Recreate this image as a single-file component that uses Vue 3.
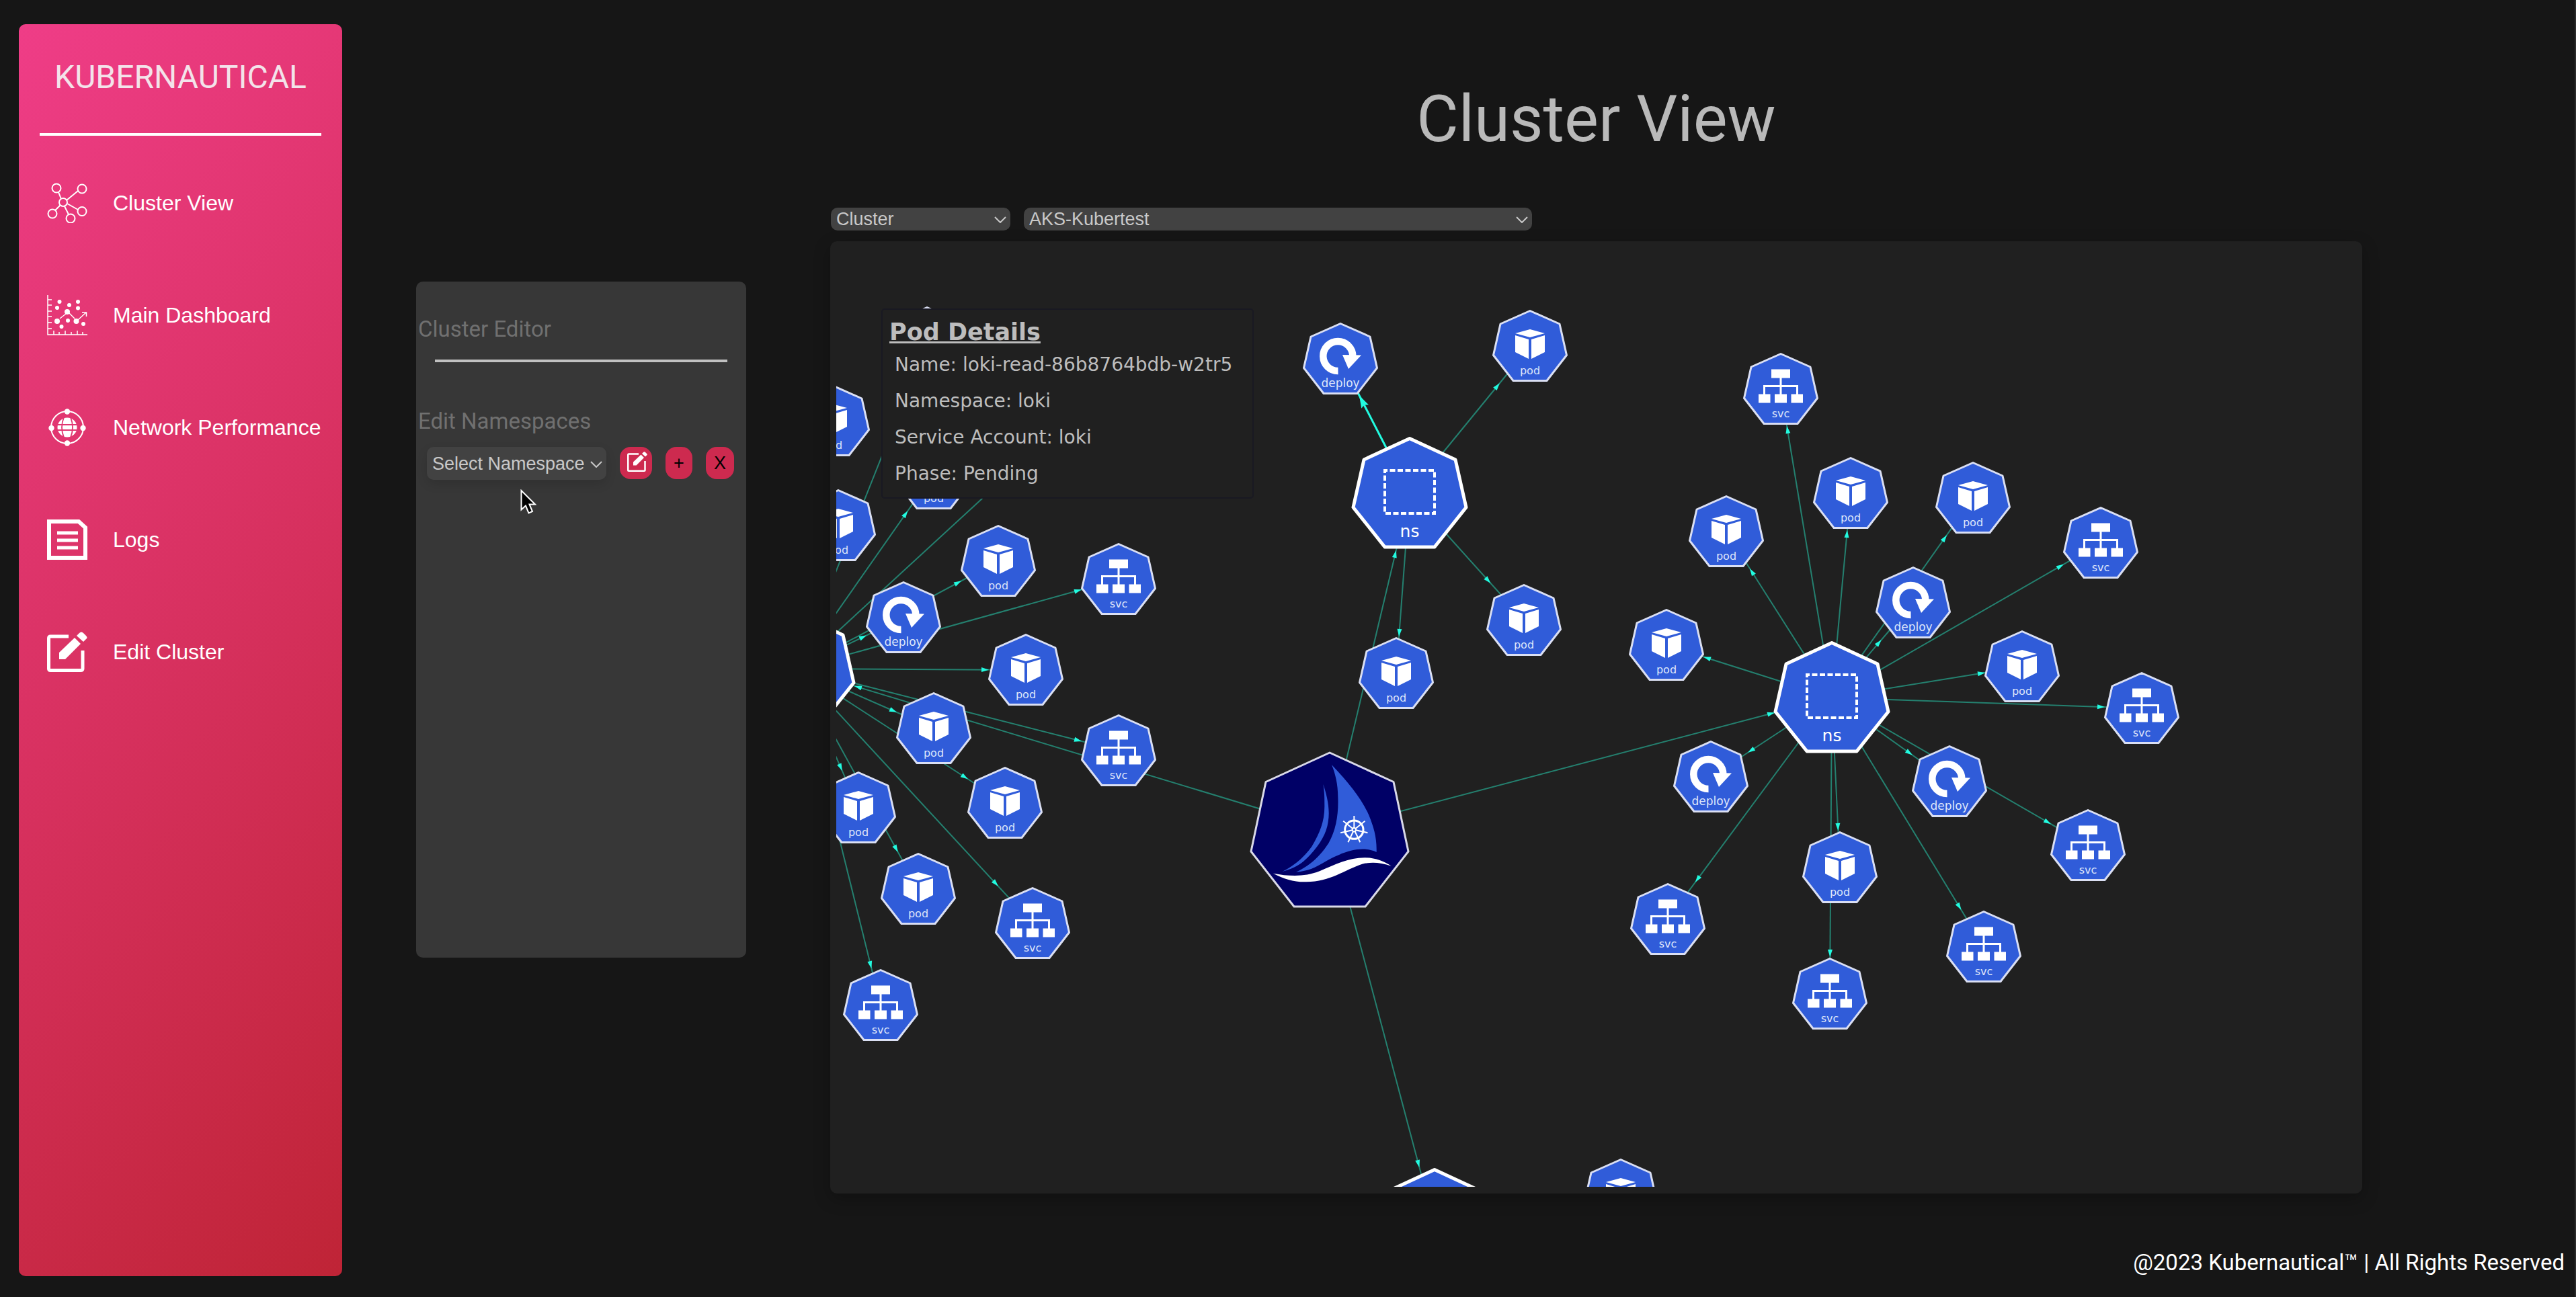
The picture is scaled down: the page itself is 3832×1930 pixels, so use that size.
<script setup>
import { ref } from 'vue'

const view = ref('Cluster')
const cluster = ref('AKS-Kubertest')
const namespace = ref('')

const navItems = [
  { label: 'Cluster View', icon: 'cluster' },
  { label: 'Main Dashboard', icon: 'dashboard' },
  { label: 'Network Performance', icon: 'network' },
  { label: 'Logs', icon: 'logs' },
  { label: 'Edit Cluster', icon: 'edit' }
]

const podDetails = [
  'Name: loki-read-86b8764bdb-w2tr5',
  'Namespace: loki',
  'Service Account: loki',
  'Phase: Pending'
]

// Visible part of the panned graph, and the area that the tooltip covers.
const viewport = { left: 1244, top: 368, right: 3505, bottom: 1766 }
const covered = { left: 1311, top: 459, right: 1865, bottom: 742 }

// Half of each node type's square bounding box; x is the centre, y the top of the shape.
const halfSize = { pod: 54, svc: 54, deploy: 54, ns: 84, root: 117 }

const namespaces = [
  {
    x: 1186, y: 911,
    children: [
      ['pod', 1379, 456], ['pod', 1600, 560], ['pod', 1238, 572], ['pod', 1389, 651],
      ['pod', 1247, 728], ['pod', 1485, 781], ['svc', 1664, 808], ['deploy', 1344, 865],
      ['pod', 1526, 943], ['svc', 1664, 1063], ['pod', 1389, 1030], ['pod', 1495, 1141],
      ['pod', 1366, 1269], ['pod', 1277, 1148], ['svc', 1536, 1320], ['svc', 1310, 1442]
    ]
  },
  {
    x: 2097, y: 650,
    children: [
      ['deploy', 1994, 480, true], ['pod', 2276, 461], ['pod', 2267, 869], ['pod', 2077, 948]
    ]
  },
  {
    x: 2725, y: 954,
    children: [
      ['svc', 2649, 525], ['pod', 2753, 680], ['pod', 2935, 687], ['pod', 2568, 737],
      ['svc', 3125, 754], ['deploy', 2846, 843], ['pod', 2479, 906], ['pod', 3008, 938],
      ['svc', 3186, 1000], ['deploy', 2545, 1102], ['svc', 3106, 1204], ['deploy', 2900, 1109],
      ['svc', 2481, 1314], ['svc', 2951, 1355], ['svc', 2722, 1425], ['pod', 2737, 1237]
    ]
  },
  { x: 2134, y: 1738, children: [] }
]

const root = { type: 'root', x: 1978, y: 1118 }
const nodes = [root]
const edges = []

function connect(from, to, strong = false) {
  const y1 = from.y + halfSize[from.type]
  const y2 = to.y + halfSize[to.type]
  const dx = to.x - from.x
  const dy = y2 - y1
  const box = halfSize[to.type] + 2
  const t = box / Math.max(Math.abs(dx), Math.abs(dy))
  edges.push({
    x1: from.x, y1, x2: to.x, y2, strong,
    tipX: to.x - dx * t,
    tipY: y2 - dy * t,
    angle: Math.atan2(dy, dx) * 180 / Math.PI
  })
}

for (const group of namespaces) {
  const ns = { type: 'ns', x: group.x, y: group.y }
  connect(root, ns)
  for (const [type, x, y, strong] of group.children) {
    const node = { type, x, y }
    connect(ns, node, strong)
    nodes.push(node)
  }
  nodes.push(ns)
}
nodes.push({ type: 'pod', x: 2411, y: 1724 })

function labelY(node) {
  return node.type === 'ns' ? 149 : 96
}

// A label is drawn only where some of it can be seen.
function hasLabel(node) {
  if (node.type === 'root') return false
  const baseline = node.y + labelY(node)
  if (node.x + 16 < viewport.left || baseline > viewport.bottom) return false
  return !(node.x > covered.left && node.x < covered.right && baseline > covered.top && baseline < covered.bottom)
}

const spokes = Array.from({ length: 7 }, (_, i) => i * 360 / 7)
</script>

<template>
  <div class="app">
    <aside class="sidebar">
      <h2 class="brand">KUBERNAUTICAL</h2>
      <hr class="brand-rule">
      <nav class="nav">
        <a v-for="item in navItems" :key="item.label" class="nav-link" href="#">
          <svg class="nav-icon" viewBox="0 0 60 60" aria-hidden="true">
            <g v-if="item.icon === 'cluster'" fill="none" stroke="#fff" stroke-width="2">
              <path d="M17 14 21 24M29 26 46 12M20 33 12 41M26 35 32 47M30 31 46 40" />
              <circle cx="24" cy="29" r="6" /><circle cx="14" cy="8" r="6.5" />
              <circle cx="52" cy="9" r="6.5" /><circle cx="8" cy="46" r="6.5" />
              <circle cx="52" cy="42.5" r="6.5" /><circle cx="35" cy="53" r="6.5" />
            </g>
            <g v-else-if="item.icon === 'dashboard'" fill="#fff" stroke="#fff" stroke-width="1.5">
              <path fill="none" d="M1 0V59H60M1 7H7M1 15H7M1 24H7M1 32H7M1 41H7M1 50H7M10 53V59M18 55V59M27 53V59M36 55V59M45 53V59M53 55V59M19 35 28 28M33 27 41 35M46 37 58 26M52 26H58.500V32" />
              <g stroke="none">
                <circle cx="15" cy="39" r="4" /><circle cx="30" cy="25" r="4" /><circle cx="43.500" cy="39" r="4" />
                <circle cx="18.500" cy="10" r="3" /><circle cx="15" cy="19" r="3" /><circle cx="33" cy="15" r="3" />
                <circle cx="46" cy="10" r="3" /><circle cx="46" cy="19.500" r="3" /><circle cx="31" cy="38" r="3" />
                <circle cx="21.500" cy="47" r="3" /><circle cx="54" cy="43" r="3" />
              </g>
            </g>
            <g v-else-if="item.icon === 'network'">
              <circle cx="30" cy="30" r="24" fill="none" stroke="#fff" stroke-width="2" />
              <g fill="#fff">
                <circle cx="30" cy="6.500" r="4.200" /><circle cx="30" cy="53.500" r="4.200" />
                <circle cx="6.500" cy="31" r="4.200" /><circle cx="53.500" cy="31" r="4.200" />
                <circle cx="30" cy="30" r="14.500" />
              </g>
              <path fill="none" stroke="#e23671" stroke-width="1.800" d="M15 26H45M15 34H45M25 15Q19 30 25 45M35 15Q41 30 35 45" />
            </g>
            <g v-else-if="item.icon === 'logs'" fill="none" stroke="#fff">
              <path stroke-width="6" d="M3 3H47L57 12V57H3Z" />
              <path stroke-width="5" d="M15 20H46M15 31H46M15 42H46" />
            </g>
            <g v-else>
              <path fill="none" stroke="#fff" stroke-width="5" d="M32 7H5Q2.500 7 2.500 10V55Q2.500 57.500 5 57.500H50Q53 57.500 53 55V28" />
              <path fill="#fff" d="M18 41V31L41 9 50 18 27 41ZM44 6 48 2Q51-1 54 2L58 6Q61 9 58 11L54 15Z" />
            </g>
          </svg>
          <span>{{ item.label }}</span>
        </a>
      </nav>
    </aside>

    <div class="content">
      <div class="workspace">
        <section class="editor">
          <h3 class="editor-heading">Cluster Editor</h3>
          <hr class="editor-rule">
          <h3 class="editor-heading editor-sub">Edit Namespaces</h3>
          <div class="editor-row">
            <div class="select-box namespace-box">
              <select v-model="namespace" class="select namespace-select" aria-label="Select Namespace">
                <option value="">Select Namespace</option>
              </select>
              <svg class="chevron" viewBox="0 0 18 10" aria-hidden="true"><path d="M1 1 9 9 17 1" /></svg>
            </div>
            <button class="action action-edit" type="button" aria-label="Edit namespace">
              <svg class="action-icon" viewBox="0 0 60 60" aria-hidden="true">
                <path fill="none" stroke="#fff" stroke-width="5" d="M34 7H5Q2.500 7 2.500 10V55Q2.500 57.500 5 57.500H50Q53 57.500 53 55V28" />
                <path fill="#fff" d="M18 41V31L41 9 50 18 27 41ZM44 6 48 2Q51-1 54 2L58 6Q61 9 58 11L54 15Z" />
              </svg>
            </button>
            <button class="action action-add" type="button">+</button>
            <button class="action action-remove" type="button">X</button>
          </div>
          <svg class="pointer" viewBox="0 0 24 37" aria-hidden="true">
            <path d="M1.500 2V30.500L8 24.500 12.500 35.500 18 33 13.500 22.500H22Z" />
          </svg>
        </section>

        <main class="main">
          <h1 class="title">Cluster View</h1>
          <div class="filters">
            <div class="select-box view-box">
              <select v-model="view" class="select" aria-label="View">
                <option>Cluster</option>
              </select>
              <svg class="chevron" viewBox="0 0 18 10" aria-hidden="true"><path d="M1 1 9 9 17 1" /></svg>
            </div>
            <div class="select-box cluster-box">
              <select v-model="cluster" class="select" aria-label="Cluster">
                <option>AKS-Kubertest</option>
              </select>
              <svg class="chevron" viewBox="0 0 18 10" aria-hidden="true"><path d="M1 1 9 9 17 1" /></svg>
            </div>
          </div>

          <div class="graph">
            <svg class="canvas" viewBox="1244 368 2261 1398">
              <defs>
                <g id="shape">
                  <path d="M0 1.500 44 21 54.500 67.500 25 105.500H-25L-54.500 67.500-44 21Z" fill="#305cd9" stroke="#dadff3" stroke-width="3" stroke-linejoin="round" />
                </g>
                <g id="pod">
                  <use href="#shape" />
                  <path fill="#fff" d="M0 29 22 35 0 41-22 35ZM-22 38-2 44V73L-22 63ZM22 38 2 44V73L22 63Z" />
                </g>
                <g id="svc">
                  <use href="#shape" />
                  <path fill="#fff" d="M-14 24.500H14V37.500H-14ZM-33 61.500H-15.500V74.500H-33ZM-9 61.500H9V74.500H-9ZM15.500 61.500H33V74.500H15.500Z" />
                  <path fill="none" stroke="#fff" stroke-width="3" d="M0 37V62M-24.500 62V49.500H24.500V62" />
                </g>
                <g id="deploy">
                  <use href="#shape" />
                  <path fill="none" stroke="#fff" stroke-width="10.500" d="M-3.500 72A22 22 0 1 1 18.300 50" />
                  <path fill="#fff" d="M3 48 31 48.500 12 69Z" />
                </g>
                <g id="ns">
                  <path d="M0 2.500 68 34 84 105 37 164H-37L-84 105-68 34Z" fill="#305cd9" stroke="#fff" stroke-width="5" stroke-linejoin="round" />
                  <rect x="-37" y="50" width="74" height="64" fill="none" stroke="#fff" stroke-width="4" stroke-dasharray="8 3.500" stroke-dashoffset="4" />
                </g>
                <g id="root">
                  <path d="M0 2 95 45.500 117 149 53 231H-53L-117 149-95 45.500Z" fill="#000066" stroke="#d9d9e8" stroke-width="3" stroke-linejoin="round" />
                  <g transform="scale(.3333) translate(-415 -55)">
                    <path fill="#305cd9" d="M386 202C402 250 418 310 408 370C400 430 360 490 300 545C270 570 240 583 203 592C250 570 300 530 335 480C370 420 392 370 392 300C392 262 392 240 386 202Z" />
                    <path fill="#305cd9" d="M424 115C500 195 560 270 590 340C612 395 626 440 624 505C560 475 480 500 400 545C350 575 320 590 265 594C340 560 380 510 410 465C445 405 455 330 452 260C452 200 440 155 424 115Z" />
                    <path fill="#fff" d="M163 600C230 612 300 618 370 590C440 560 500 530 570 530C620 530 655 545 690 567C640 550 600 548 560 558C480 585 420 636 310 638C260 640 210 625 163 600Z" />
                    <g transform="translate(524 405)" stroke="#fff" fill="none">
                      <circle r="41" stroke-width="9" />
                      <circle r="8" stroke-width="6" />
                      <g v-for="a in spokes" :key="a" :transform="`rotate(${a})`">
                        <path stroke-width="6" d="M0-8V-62" />
                      </g>
                    </g>
                  </g>
                </g>
              </defs>

              <g v-for="(e, i) in edges" :key="'e' + i" :class="['edge', { strong: e.strong }]">
                <line :x1="e.x1" :y1="e.y1" :x2="e.x2" :y2="e.y2" />
                <path
                  :d="e.strong ? 'M2 0-17-6-14 0-17 6Z' : 'M1 0-10-3.500V3.500Z'"
                  :transform="`translate(${e.tipX} ${e.tipY}) rotate(${e.angle})`"
                />
              </g>

              <g v-for="(n, i) in nodes" :key="'n' + i" :transform="`translate(${n.x} ${n.y})`">
                <use :href="'#' + n.type" />
                <text v-if="hasLabel(n)" :class="['label', 'label-' + n.type]" :y="labelY(n)">{{ n.type }}</text>
              </g>
            </svg>

            <div class="tooltip" role="tooltip">
              <h4 class="tooltip-title">Pod Details</h4>
              <p v-for="line in podDetails" :key="line" class="tooltip-line">{{ line }}</p>
            </div>
          </div>
        </main>
      </div>
      <footer class="footer">@2023 Kubernautical™ | All Rights Reserved</footer>
    </div>
  </div>
</template>

<style>
body {
  background: #161616;
}
</style>

<style scoped>
.app {
  box-sizing: border-box;
  display: flex;
  min-height: 100vh;
  padding-left: 28px;
  border-right: 2px solid #2c2c2c;
  background: #161616;
  font-family: Roboto, "Liberation Sans", sans-serif;
}

h1, h2, h3, h4, p, hr {
  margin: 0;
  border: 0;
  font-weight: 400;
}

.sidebar {
  box-sizing: border-box;
  flex: 0 0 481px;
  margin: 36px 0 31px;
  padding: 51px 31px 0;
  border-radius: 10px;
  background: linear-gradient(135deg, #ef3d87, #bf2436);
}

.brand {
  color: #f3e3ea;
  font-size: 48px;
  line-height: 56px;
  text-align: center;
}

.brand-rule {
  height: 4px;
  margin-top: 55px;
  background: #fff;
}

.nav {
  display: flex;
  flex-direction: column;
  gap: 107px;
  margin: 70px 0 0 11px;
}

.nav-link {
  display: flex;
  align-items: center;
  gap: 38px;
  color: #fff;
  font: 32px/40px "Liberation Sans", Arial, sans-serif;
  text-decoration: none;
  white-space: nowrap;
}

.nav-icon {
  flex: none;
  width: 60px;
  height: 60px;
}

.content {
  display: flex;
  flex: 1;
  flex-direction: column;
  min-width: 0;
}

.workspace {
  display: flex;
  align-items: flex-start;
  gap: 125px;
  padding: 121px 316px 0 110px;
}

.editor {
  position: relative;
  box-sizing: border-box;
  flex: 0 0 491px;
  min-height: 1006px;
  margin-top: 298px;
  padding-top: 52px;
  border-radius: 10px;
  background: #373737;
}

.editor-heading {
  padding-left: 3px;
  color: #707070;
  font-size: 33px;
  line-height: 38px;
}

.editor-rule {
  height: 4px;
  margin: 26px 28px 0;
  background: #c0c0c0;
}

.editor-sub {
  margin-top: 69px;
}

.editor-row {
  display: flex;
  gap: 20px;
  margin: 19px 0 0 16px;
}

.select-box {
  position: relative;
  display: flex;
}

.select {
  width: 100%;
  height: 34px;
  padding: 0 8px;
  border: 0;
  border-radius: 10px;
  appearance: none;
  background: #424242;
  color: #c9c9c9;
  font: 27px/34px "Liberation Sans", Arial, sans-serif;
}

.namespace-select {
  height: 49px;
  box-shadow: 0 6px 16px rgba(0, 0, 0, 0.12);
}

.namespace-box {
  width: 267px;
}

.chevron {
  position: absolute;
  top: 50%;
  right: 6px;
  width: 18px;
  height: 10px;
  margin-top: -4px;
  fill: none;
  stroke: #c9c9c9;
  stroke-width: 2;
  pointer-events: none;
}

.action {
  display: flex;
  align-items: center;
  justify-content: center;
  height: 48px;
  padding: 0;
  border: 0;
  border-radius: 16px;
  background: #cd2a4f;
  color: #000;
  font: 27px/32px "Liberation Sans", Arial, sans-serif;
}

.action-edit {
  width: 48px;
}

.action-add {
  width: 40px;
}

.action-remove {
  width: 42px;
}

.action-icon {
  width: 30px;
  height: 30px;
  margin: 0 0 4px 4px;
}

.pointer {
  position: absolute;
  top: 309px;
  left: 155px;
  width: 24px;
  height: 37px;
  fill: #000;
  stroke: #fff;
  stroke-width: 2;
}

.main {
  flex: 1;
  min-width: 0;
}

.title {
  color: #b9b9b9;
  font-size: 96px;
  line-height: 112px;
  text-align: center;
}

.filters {
  display: flex;
  gap: 20px;
  margin-top: 76px;
  padding-left: 1px;
}

.view-box {
  width: 267px;
}

.cluster-box {
  width: 756px;
}

.graph {
  position: relative;
  margin-top: 16px;
  padding: 9px 9px 10px;
  border-radius: 10px;
  background: #202020;
  box-shadow: 0 8px 24px rgba(0, 0, 0, 0.25);
}

.canvas {
  display: block;
  width: 100%;
}

.edge line {
  stroke: #24806f;
  stroke-width: 2;
}

.edge path {
  fill: #22fbe0;
}

.strong line {
  stroke: #22fbe0;
  stroke-width: 3;
}

.label {
  fill: #dfe6fa;
  font-family: "DejaVu Sans", sans-serif;
  font-size: 16px;
  text-anchor: middle;
}

.label-deploy {
  font-size: 17px;
}

.label-ns {
  fill: #fff;
  font-size: 25px;
}

.tooltip {
  position: absolute;
  top: 100px;
  left: 76px;
  box-sizing: border-box;
  width: 554px;
  height: 283px;
  padding: 11px 10px 0;
  border: 2px solid #191922;
  border-radius: 5px;
  background: #202020;
  color: #bdbdbd;
  font-family: "DejaVu Sans", sans-serif;
  white-space: nowrap;
}

.tooltip-title {
  font-size: 35px;
  font-weight: 700;
  line-height: 44px;
  text-decoration: underline;
}

.tooltip-line {
  padding-left: 8px;
  font-size: 28px;
  line-height: 54px;
}

.footer {
  margin-top: auto;
  padding: 0 15px 31px 0;
  color: #fff;
  font-size: 33px;
  line-height: 40px;
  text-align: right;
}
</style>
